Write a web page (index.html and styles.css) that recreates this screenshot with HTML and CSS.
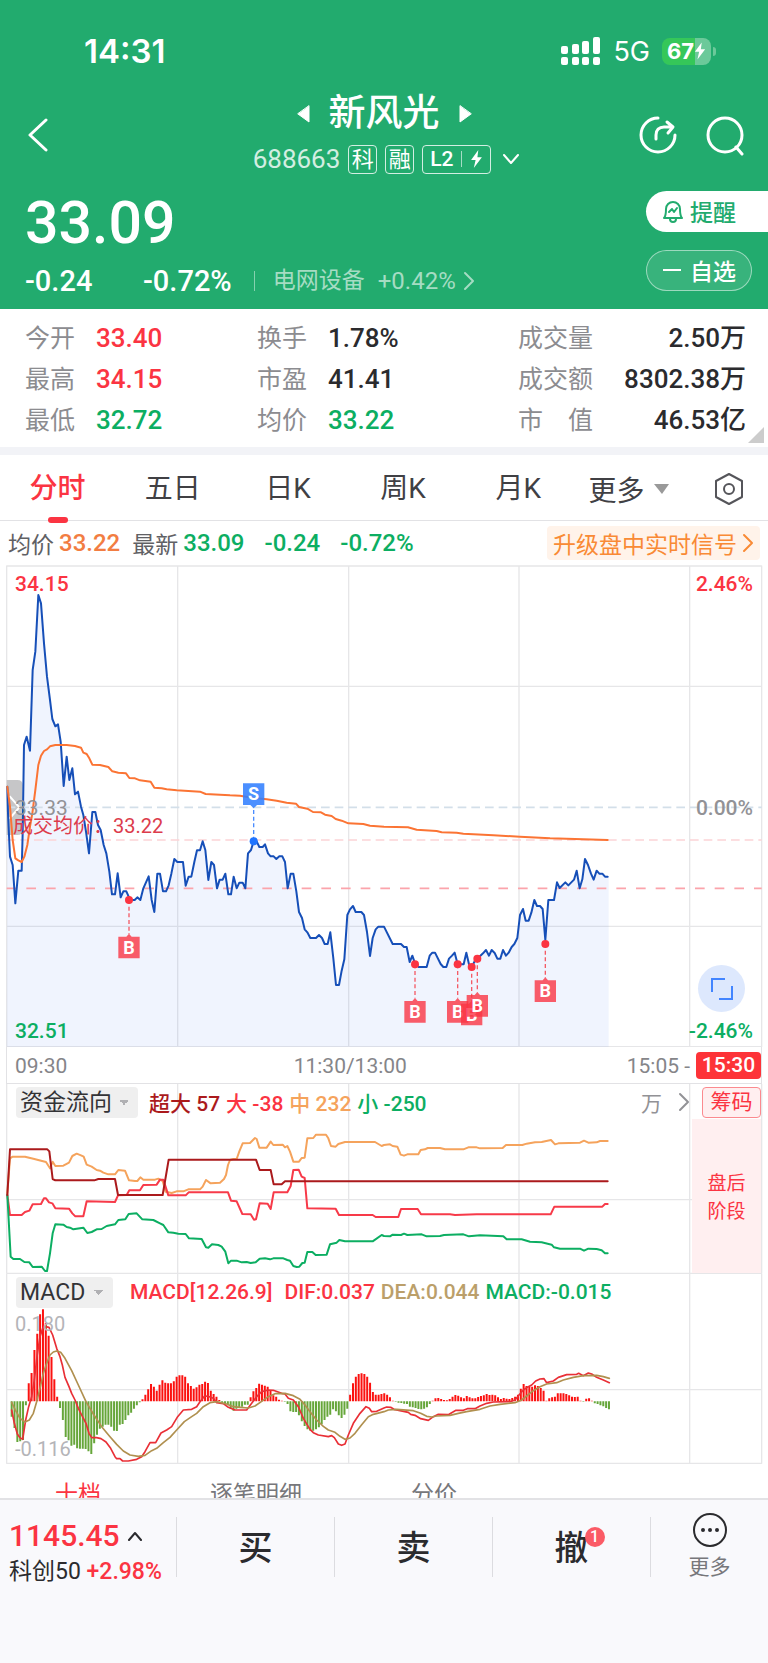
FILE: index.html
```html
<!DOCTYPE html>
<html lang="zh-CN">
<head>
	<meta charset="utf-8">
	<meta name="viewport" content="width=device-width, initial-scale=1">
	<title>新风光 688663</title>
	<link rel="stylesheet" href="styles.css">
</head>
<body>
	<header class="header">
		<div class="statusbar">
			<span class="clock">14:31</span>
			<div class="status-icons">
				<svg class="signal" viewBox="0 0 40 28">
					<rect x="0" y="9" width="7" height="8" rx="2"/><rect x="11" y="7" width="7" height="10" rx="2"/><rect x="21" y="4" width="7" height="13" rx="2"/><rect x="32" y="0" width="7" height="17" rx="2"/>
					<rect x="0" y="20" width="7" height="8" rx="2"/><rect x="11" y="20" width="7" height="8" rx="2"/><rect x="21" y="20" width="7" height="8" rx="2"/><rect x="32" y="20" width="7" height="8" rx="2"/>
				</svg>
				<span class="net">5G</span>
				<span class="battery">67<svg viewBox="0 0 14 20"><path d="M9 0L1 11h5L4 20l9-12H8z"/></svg></span>
			</div>
		</div>
		<div class="nav">
			<button class="icon-btn back" aria-label="返回"><svg viewBox="0 0 22 34"><path d="M19 2L3 17l16 15"/></svg></button>
			<div class="title">
				<div class="name-row">
					<button class="icon-btn" aria-label="上一只"><svg class="tri" viewBox="0 0 13 18"><path d="M12 1v16L1 9z"/></svg></button>
					<h1>新风光</h1>
					<button class="icon-btn" aria-label="下一只"><svg class="tri" viewBox="0 0 13 18"><path d="M1 1v16L12 9z"/></svg></button>
				</div>
				<div class="code-row">
					<span class="code">688663</span>
					<span class="tag">科</span>
					<span class="tag">融</span>
					<span class="tag tag-l2">L2<i></i><svg viewBox="0 0 14 20"><path d="M9 0L1 11h5L4 20l9-12H8z"/></svg></span>
					<svg class="chev" viewBox="0 0 16 10"><path d="M1 1l7 8 7-8"/></svg>
				</div>
			</div>
			<div class="nav-icons">
				<button class="icon-btn" aria-label="分享"><svg viewBox="0 0 40 40"><path d="M20 2A17 17 0 1 0 37 19M18 23v-4c0-5 3-8 8-8h8M29 6l6 5-5 6"/></svg></button>
				<button class="icon-btn" aria-label="搜索"><svg viewBox="0 0 40 40"><circle cx="20" cy="19" r="17"/><path d="M31 31l6 7"/></svg></button>
			</div>
		</div>
		<div class="quote">
			<div class="quote-main">
				<div class="price">33.09</div>
				<div class="change-row">
					<span class="change">-0.24</span>
					<span class="percent">-0.72%</span>
					<a class="sector" href="#sector">电网设备 <b>+0.42%</b><svg viewBox="0 0 12 20"><path d="M2 2l8 8-8 8"/></svg></a>
				</div>
			</div>
			<div class="pills">
				<button class="pill pill-alert"><svg viewBox="0 0 22 24"><path d="M2 19c2-2 2-4 2-9a7 7 0 0 1 14 0c0 5 0 7 2 9zM8 20a3 3 0 0 0 6 0M7 13l3-3 2 3 3-4"/></svg>提醒</button>
				<button class="pill pill-fav"><svg viewBox="0 0 18 24"><path d="M0 12h18"/></svg>自选</button>
			</div>
		</div>
	</header>

	<section class="stats">
		<dl><dt>今开</dt><dd class="up">33.40</dd><dt>最高</dt><dd class="up">34.15</dd><dt>最低</dt><dd class="down">32.72</dd></dl>
		<dl><dt>换手</dt><dd>1.78%</dd><dt>市盈</dt><dd>41.41</dd><dt>均价</dt><dd class="down">33.22</dd></dl>
		<dl class="wide"><dt>成交量</dt><dd>2.50万</dd><dt>成交额</dt><dd>8302.38万</dd><dt class="spread"><span>市</span><span>值</span></dt><dd>46.53亿</dd></dl>
	</section>

	<nav class="tabs">
		<a class="active" href="#min">分时</a>
		<a href="#5d">五日</a>
		<a href="#day">日K</a>
		<a href="#week">周K</a>
		<a href="#month">月K</a>
		<button class="more-tab">更多<svg viewBox="0 0 15 10"><path d="M0 0h15L8 10z"/></svg></button>
		<button class="gear" aria-label="设置"><svg viewBox="0 0 30 32"><path d="M15 1l13 7v16l-13 7-13-7V8z"/><circle cx="15" cy="16" r="5"/></svg></button>
	</nav>

	<div class="info">
		<span>均价</span><b class="avg">33.22</b>
		<span>最新</span><b class="down">33.09</b>
		<b class="down wide-gap">-0.24</b>
		<b class="down wide-gap">-0.72%</b>
		<a class="upgrade" href="#upgrade">升级盘中实时信号<svg viewBox="0 0 12 20"><path d="M2 2l8 8-8 8"/></svg></a>
	</div>

	<main>
		<section class="panel">
			<svg class="chart" viewBox="0 -705 2304 1446">
				<defs>
					<g id="buy">
						<path class="buy-tag" d="M-32 0h24l8-9 8 9h24v65h-64z"/>
						<text class="mark" y="51">B</text>
					</g>
				</defs>
				<path class="grid" d="M20-702H2285V740H20zM20-341H2285M20 379H2285M533-702V740M1046-702V740M1557-702V740M2069-702V740"/>
				<path class="handle" d="M20-60h32q16 0 16 16V89q0 16-16 16H20z"/>
				<path class="handle-arrow" d="M30 -10L58 22L30 54"/>
				<polygon class="area" points="20,740 22,-40 24,40 30,170 38,195 46,310 55,212 65,212 68,100 72,-165 80,-190 90,-148 98,-390 106,-445 115,-615 123,-590 132,-470 141,-370 150,-300 157,-243 166,-221 174,-227 182,-175 191,-42 200,-130 208,-60 217,-95 225,-17 234,-25 243,20 250,45 258,95 267,160 277,36 286,36 294,75 302,90 311,135 319,160 328,215 336,283 345,283 353,220 362,292 370,274 379,274 387,292 396,300 404,300 412,292 421,300 430,265 446,229 455,300 463,336 472,221 480,221 489,274 498,274 506,256 514,221 523,177 532,186 549,186 557,257 566,230 574,230 583,186 591,151 600,151 608,124 616,150 625,240 634,186 642,195 651,265 659,239 668,239 676,221 685,283 693,283 701,230 710,265 718,248 728,248 736,265 744,160 753,150 761,124 770,124 778,141 788,141 795,133 804,160 812,169 821,169 829,177 838,169 847,169 855,186 863,265 872,221 880,221 889,274 897,336 906,354 914,388 922,397 931,414 948,414 957,405 966,414 974,432 983,432 991,397 1000,475 1008,555 1017,555 1025,512 1033,478 1042,345 1050,328 1059,318 1067,336 1084,336 1092,345 1101,396 1110,468 1118,414 1127,388 1135,380 1152,380 1178,432 1203,432 1212,441 1220,441 1229,486 1237,467 1246,493 1256,501 1280,501 1289,467 1297,458 1305,458 1322,492 1330,501 1339,501 1347,476 1356,467 1364,458 1373,493 1391,493 1399,458 1407,493 1415,501 1424,484 1432,476 1449,460 1458,450 1467,467 1475,450 1484,459 1492,476 1501,476 1509,450 1518,467 1526,458 1535,441 1543,432 1552,414 1560,345 1569,327 1577,362 1586,362 1594,338 1603,300 1611,318 1620,318 1628,327 1636,420 1645,300 1662,300 1671,247 1679,264 1696,247 1705,256 1722,239 1730,212 1739,265 1747,238 1755,177 1764,195 1773,221 1781,239 1790,212 1798,221 1807,221 1815,230 1826,230 1826,740"/>
				<path class="dash-zero" d="M20 22H2285"/>
				<path class="dash-avg" d="M20 120H2285"/>
				<path class="dash-cost" d="M20 265H2285"/>
				<polyline class="line price-line" points="22,-40 24,40 30,170 38,195 46,310 55,212 65,212 68,100 72,-165 80,-190 90,-148 98,-390 106,-445 115,-615 123,-590 132,-470 141,-370 150,-300 157,-243 166,-221 174,-227 182,-175 191,-42 200,-130 208,-60 217,-95 225,-17 234,-25 243,20 250,45 258,95 267,160 277,36 286,36 294,75 302,90 311,135 319,160 328,215 336,283 345,283 353,220 362,292 370,274 379,274 387,292 396,300 404,300 412,292 421,300 430,265 446,229 455,300 463,336 472,221 480,221 489,274 498,274 506,256 514,221 523,177 532,186 549,186 557,257 566,230 574,230 583,186 591,151 600,151 608,124 616,150 625,240 634,186 642,195 651,265 659,239 668,239 676,221 685,283 693,283 701,230 710,265 718,248 728,248 736,265 744,160 753,150 761,124 770,124 778,141 788,141 795,133 804,160 812,169 821,169 829,177 838,169 847,169 855,186 863,265 872,221 880,221 889,274 897,336 906,354 914,388 922,397 931,414 948,414 957,405 966,414 974,432 983,432 991,397 1000,475 1008,555 1017,555 1025,512 1033,478 1042,345 1050,328 1059,318 1067,336 1084,336 1092,345 1101,396 1110,468 1118,414 1127,388 1135,380 1152,380 1178,432 1203,432 1212,441 1220,441 1229,486 1237,467 1246,493 1256,501 1280,501 1289,467 1297,458 1305,458 1322,492 1330,501 1339,501 1347,476 1356,467 1364,458 1373,493 1391,493 1399,458 1407,493 1415,501 1424,484 1432,476 1449,460 1458,450 1467,467 1475,450 1484,459 1492,476 1501,476 1509,450 1518,467 1526,458 1535,441 1543,432 1552,414 1560,345 1569,327 1577,362 1586,362 1594,338 1603,300 1611,318 1620,318 1628,327 1636,420 1645,300 1662,300 1671,247 1679,264 1696,247 1705,256 1722,239 1730,212 1739,265 1747,238 1755,177 1764,195 1773,221 1781,239 1790,212 1798,221 1807,221 1815,230 1823,230"/>
				<polyline class="line avg-line" points="22,-40 30,20 38,120 46,175 55,181 65,186 73,170 82,135 90,80 97,40 106,-30 115,-105 123,-133 132,-147 141,-152 150,-161 166,-165 200,-165 225,-162 243,-157 250,-142 260,-138 268,-125 277,-106 300,-105 325,-99 337,-86 355,-82 378,-80 388,-66 405,-65 420,-59 452,-55 463,-37 485,-35 500,-32 530,-29 600,-25 617,-18 660,-16 690,-14 720,-13 760,-6 800,-2 830,2 860,8 888,11 897,21 922,26 939,36 963,37 975,44 995,48 1007,57 1025,62 1045,70 1090,72 1110,77 1152,80 1224,82 1250,89 1310,93 1325,97 1370,98 1390,101 1480,106 1560,110 1650,115 1750,118 1823,120"/>
				<!-- trade marks -->
				<path class="stem" d="M387 300V402M1245 493V595M1373 493V595M1415 501V603M1432 476V577M1636 432V533"/>
				<path class="stem sell" d="M761 30V124"/>
				<g class="dots">
					<circle cx="387" cy="300" r="12"/><circle cx="1245" cy="493" r="12"/><circle cx="1373" cy="493" r="12"/>
					<circle cx="1415" cy="501" r="12"/><circle cx="1432" cy="476" r="12"/><circle cx="1636" cy="432" r="12"/>
					<circle class="sell-dot" cx="761" cy="124" r="12"/>
				</g>
				<path class="sell-tag" d="M729-50h64v65h-22l-10 10-10-10h-22z"/>
				<text class="mark" x="761" y="1">S</text>
				<use href="#buy" x="387" y="410"/>
				<use href="#buy" x="1245" y="603"/>
				<use href="#buy" x="1373" y="603"/>
				<use href="#buy" x="1415" y="611"/>
				<use href="#buy" x="1432" y="585"/>
				<use href="#buy" x="1636" y="541"/>
			</svg>
			<span class="lab lab-high up">34.15</span>
			<span class="lab lab-pct-high up">2.46%</span>
			<span class="lab lab-mid">33.33</span>
			<span class="lab lab-pct-mid">0.00%</span>
			<span class="lab lab-cost">成交均价：33.22</span>
			<span class="lab lab-low down">32.51</span>
			<span class="lab lab-pct-low down">-2.46%</span>
			<button class="expand" aria-label="全屏"><svg viewBox="0 0 24 24"><path d="M2 15V2h13M22 9v13H9"/></svg></button>
		</section>
		<div class="axis">
			<span>09:30</span>
			<span>11:30/13:00</span>
			<span class="axis-end">15:05 - <b>15:30</b></span>
		</div>

		<section class="panel">
			<svg class="chart" viewBox="0 12 2304 570">
				<path class="grid" d="M20 0V580H2285V0M20 359H2285M533 0V580M1046 0V580M1557 0V580M2069 0V580"/>
				<polyline class="line flow-mid" points="22,340 30,235 38,230 75,230 100,236 138,246 150,265 158,245 166,258 190,257 207,248 217,228 230,221 243,226 251,230 260,254 275,260 290,270 300,272 310,278 325,283 345,283 355,270 375,272 387,301 405,303 412,303 421,292 430,299 465,299 475,296 488,303 497,335 515,339 530,334 550,334 565,328 600,328 608,320 618,300 632,310 660,308 672,297 678,285 684,255 690,240 700,237 710,237 718,214 728,190 750,189 765,174 770,177 778,203 800,203 812,185 820,195 848,194 855,202 862,198 870,215 880,245 897,245 905,234 914,233 922,175 940,174 948,164 978,164 985,175 993,198 1007,200 1015,192 1035,186 1125,186 1145,198 1152,195 1170,193 1178,198 1192,200 1202,224 1212,227 1222,223 1255,223 1262,210 1275,208 1283,204 1320,204 1335,208 1390,208 1405,202 1430,202 1440,205 1508,204 1518,195 1567,195 1580,191 1605,187 1625,186 1653,180 1665,193 1675,190 1740,188 1752,182 1765,188 1790,187 1800,183 1823,183"/>
				<polyline class="line flow-big" points="22,345 30,405 65,405 75,396 88,392 98,373 123,372 132,355 138,355 147,367 157,370 166,385 207,386 217,400 226,409 250,409 260,364 345,366 354,346 380,345 388,331 420,331 430,315 470,314 480,299 490,299 505,346 557,346 566,337 684,337 693,362 710,364 727,402 752,403 762,419 768,418 779,370 803,371 812,387 821,337 862,337 872,318 880,270 896,269 905,290 914,294 922,385 1007,386 1017,405 1118,405 1127,411 1195,411 1203,387 1253,387 1263,403 1350,403 1365,405 1430,403 1652,403 1663,380 1807,380 1815,372 1823,372"/>
				<polyline class="line flow-small" points="22,345 32,530 40,537 60,537 73,546 88,547 98,561 125,560 135,573 141,573 150,520 158,460 166,433 190,434 200,441 210,443 220,448 250,443 262,459 275,456 290,448 305,447 320,438 345,433 355,420 376,418 386,402 410,400 427,418 460,420 480,430 490,435 505,457 520,458 535,461 557,462 567,475 605,477 618,502 625,503 636,493 655,495 665,500 676,515 685,550 693,542 710,542 725,547 740,546 752,549 767,547 779,536 795,535 810,538 820,535 850,535 862,540 870,542 880,558 890,561 898,560 907,549 914,548 922,516 937,516 947,525 980,524 990,493 1010,488 1018,480 1035,484 1118,484 1145,465 1152,468 1170,469 1178,464 1203,465 1212,461 1222,465 1265,463 1280,469 1320,468 1332,465 1390,463 1407,469 1440,466 1510,469 1520,478 1565,478 1590,485 1625,487 1655,494 1662,502 1680,506 1740,506 1752,512 1765,506 1790,507 1805,511 1815,520 1823,520"/>
				<polyline class="line flow-super" points="22,345 30,208 142,208 148,214 158,297 166,301 283,301 295,297 345,297 354,345 488,345 506,239 768,239 779,270 812,270 821,313 845,313 855,304 1823,304"/>
			</svg>
			<div class="panel-head">
				<select class="picker" aria-label="指标一"><option>资金流向</option></select>
				<div class="legend legend-flow">
					<span class="c-super">超大 57</span><span class="c-big">大 -38</span><span class="c-mid">中 232</span><span class="down">小 -250</span>
				</div>
				<span class="unit">万<svg viewBox="0 0 12 20"><path d="M2 2l8 8-8 8"/></svg></span>
				<button class="chips">筹码</button>
			</div>
			<div class="after-hours">盘后<br>阶段</div>
		</section>

		<section class="panel">
			<svg class="chart" viewBox="0 12 2304 570">
				<path class="grid" d="M20 0V580H2285V0M20 10H2285M20 359H2285M533 0V580M1046 0V580M1557 0V580M2069 0V580"/>
				<path id="bars-up" class="bars bars-up" d=""/>
				<path id="bars-down" class="bars bars-down" d=""/>
				<polyline class="line dif" points="35,420 43,460 52,492 60,503 68,508 77,450 86,410 95,380 103,330 111,260 120,200 128,175 137,170 147,172 158,195 170,235 180,260 187,285 195,322 207,350 215,370 225,390 235,415 245,435 258,460 267,490 275,503 290,503 303,506 318,516 332,535 345,560 350,566 360,566 368,573 385,573 410,568 425,560 435,545 450,518 467,518 483,489 500,480 515,470 533,440 550,420 575,418 590,410 600,395 612,380 622,378 640,385 650,398 670,401 685,412 705,420 740,420 755,400 770,380 785,365 805,360 820,361 845,370 855,372 865,385 880,390 895,410 910,445 930,478 940,488 955,495 985,500 995,497 1003,503 1015,522 1025,526 1035,522 1045,495 1060,460 1080,430 1098,410 1108,415 1115,425 1130,424 1152,414 1160,411 1172,412 1182,418 1225,427 1232,433 1245,436 1262,446 1285,451 1300,440 1315,433 1345,434 1355,428 1368,421 1390,421 1402,416 1425,416 1440,408 1460,400 1480,396 1530,395 1545,390 1557,375 1570,360 1585,350 1595,345 1607,333 1620,327 1632,326 1640,338 1660,333 1675,322 1700,314 1730,313 1736,310 1750,317 1765,309 1775,312 1790,322 1810,330 1828,338"/>
				<polyline class="line dea" points="35,397 45,418 60,445 75,456 88,450 100,430 110,395 120,355 130,310 140,280 150,255 160,246 170,243 182,247 195,265 215,302 235,345 258,395 280,432 305,470 330,500 350,523 370,543 390,555 415,559 435,556 455,542 470,535 490,518 510,502 530,480 553,455 575,440 590,430 610,410 630,398 650,395 680,402 700,410 720,412 745,414 765,408 785,394 805,380 825,371 855,370 880,377 900,388 915,405 930,425 950,450 970,469 985,480 1005,487 1020,499 1035,508 1050,504 1065,490 1085,464 1105,440 1120,433 1152,425 1165,420 1190,418 1240,422 1262,430 1280,439 1295,441 1310,438 1350,436 1375,430 1400,425 1440,418 1470,408 1500,403 1545,398 1565,390 1580,378 1600,362 1620,350 1640,342 1670,338 1690,330 1720,322 1750,317 1790,316 1810,320 1828,325"/>
			</svg>
			<span class="lab lab-small lab-macd-high">0.180</span>
			<span class="lab lab-small lab-macd-low">-0.116</span>
			<div class="panel-head">
				<select class="picker picker-macd" aria-label="指标二"><option>MACD</option></select>
				<div class="legend legend-macd">
					<span class="up first">MACD[12.26.9]</span><span class="up">DIF:0.037</span><span class="c-dea">DEA:0.044</span><span class="down">MACD:-0.015</span>
				</div>
			</div>
		</section>
	</main>

	<nav class="subtabs">
		<a class="active" href="#ten">十档</a>
		<a href="#ticks">逐笔明细</a>
		<a href="#levels">分价</a>
	</nav>

	<footer class="toolbar">
		<a class="index" href="#index">
			<span class="index-value">1145.45<svg viewBox="0 0 16 10"><path d="M2 9l6-7 6 7"/></svg></span>
			<span class="index-name">科创50 <b>+2.98%</b></span>
		</a>
		<button class="trade">买</button>
		<button class="trade">卖</button>
		<button class="trade"><span class="cancel">撤<i class="badge">1</i></span></button>
		<button class="more"><svg viewBox="0 0 36 36"><circle cx="18" cy="18" r="16"/><path d="M11 18h0M18 18h0M25 18h0"/></svg>更多</button>
	</footer>
	<script src="script.js"></script>
</body>
</html>
```
FILE: styles.css
```css
*
{
	box-sizing:border-box;
}
body
{
	margin:0;
	background:#fff;
	color:#2b2b2e;
	font-family:Roboto,"Noto Sans CJK SC",sans-serif;
	font-size:24px;
}
button,select
{
	margin:0;
	padding:0;
	border:0;
	background:none;
	color:inherit;
	font:inherit;
}
a
{
	color:inherit;
	text-decoration:none;
}
b
{
	font-weight:500;
}
svg
{
	display:block;
	fill:none;
	stroke-linecap:round;
	stroke-linejoin:round;
}
.up
{
	color:#fb3442;
}
.down
{
	color:#0cae62;
}

/* header */
.header
{
	background:#22ab6e;
	color:#fff;
	height:309px;
}
.statusbar
{
	display:flex;
	justify-content:space-between;
	align-items:center;
	height:88px;
	padding:14px 57px 0 84px;
	font-family:Inter,"Noto Sans CJK SC",sans-serif;
}
.clock
{
	font-size:33px;
	font-weight:600;
}
.status-icons
{
	display:flex;
	align-items:center;
}
.signal
{
	width:40px;
	height:28px;
	fill:#fff;
}
.net
{
	margin:0 12px;
	font-size:27px;
}
.battery
{
	display:flex;
	align-items:center;
	justify-content:center;
	width:49px;
	height:27px;
	border-radius:8px;
	background:linear-gradient(90deg,#35c759 67%,#6cc99a 67%);
	position:relative;
	font-size:22px;
	font-weight:700;
}
.battery::after
{
	content:"";
	position:absolute;
	right:-5px;
	top:9px;
	width:3px;
	height:9px;
	border-radius:0 3px 3px 0;
	background:#6cc99a;
}
.battery svg
{
	width:12px;
	height:18px;
	fill:#fff;
}
.nav
{
	display:grid;
	grid-template-columns:160px 1fr 160px;
	align-items:center;
	height:92px;
	padding-top:2px;
}
.icon-btn svg
{
	stroke:#fff;
	stroke-width:3;
}
.back
{
	padding-left:27px;
}
.back svg
{
	width:22px;
	height:34px;
}
.name-row,.code-row
{
	display:flex;
	align-items:center;
	justify-content:center;
}
.name-row
{
	height:48px;
	gap:19px;
}
h1
{
	margin:0;
	font-size:37px;
	font-weight:500;
	line-height:48px;
}
.icon-btn .tri
{
	width:13px;
	height:18px;
	fill:#fff;
	stroke-width:1;
}
.code-row
{
	height:42px;
	padding-left:4px;
	gap:8px;
}
.code
{
	font-size:26px;
	opacity:0.8;
}
.tag
{
	display:flex;
	align-items:center;
	justify-content:center;
	width:29px;
	height:29px;
	border:1px solid rgba(255,255,255,0.8);
	border-radius:4px;
	font-size:22px;
	line-height:27px;
}
.tag-l2
{
	width:69px;
	gap:8px;
	font-size:21px;
	font-weight:500;
}
.tag-l2 i
{
	width:1px;
	height:16px;
	background:rgba(255,255,255,0.6);
}
.tag-l2 svg
{
	width:13px;
	height:18px;
	fill:#fff;
}
.chev
{
	width:16px;
	height:10px;
	margin-left:4px;
	stroke:#fff;
	stroke-width:2;
}
.nav-icons
{
	display:flex;
	justify-content:flex-end;
	gap:27px;
	padding:2px 23px 0 0;
}
.nav-icons svg
{
	width:40px;
	height:40px;
}
.quote
{
	display:flex;
	justify-content:space-between;
	padding:11px 0 0 25px;
}
.price
{
	font-size:59px;
	font-weight:500;
	line-height:64px;
}
.change-row
{
	display:flex;
	align-items:center;
	height:52px;
	font-size:29px;
	font-weight:500;
}
.change
{
	width:118px;
}
.sector
{
	display:flex;
	align-items:center;
	margin-left:22px;
	padding-left:18px;
	border-left:1px solid rgba(255,255,255,0.45);
	color:#a5dcc3;
	font-size:23px;
	font-weight:400;
	line-height:20px;
}
.sector b
{
	margin-left:13px;
	font-size:24px;
	font-weight:400;
}
.sector svg
{
	width:12px;
	height:20px;
	margin-left:7px;
	stroke:#a5dcc3;
	stroke-width:2;
}
.pills
{
	display:flex;
	flex-direction:column;
	gap:18px;
}
.pill
{
	display:flex;
	align-items:center;
	height:41px;
	padding:0 0 2px 16px;
	font-size:23px;
	font-weight:500;
}
.pill-alert
{
	width:122px;
	border-radius:21px 0 0 21px;
	background:#fff;
	color:#22ab6e;
	gap:6px;
}
.pill-alert svg
{
	width:22px;
	height:24px;
	stroke:#22ab6e;
	stroke-width:2;
}
.pill-fav
{
	width:106px;
	border:1px solid rgba(255,255,255,0.5);
	border-radius:21px;
	background:rgba(255,255,255,0.1);
	gap:9px;
}
.pill-fav svg
{
	width:18px;
	height:24px;
	stroke:#fff;
	stroke-width:2;
}

/* stats */
.stats
{
	display:grid;
	grid-template-columns:232fr 261fr 228fr;
	padding:9px 22px 6px 25px;
	position:relative;
}
.stats::after
{
	content:"";
	position:absolute;
	right:4px;
	bottom:4px;
	border-left:16px solid transparent;
	border-bottom:16px solid #ccc;
}
.stats dl
{
	display:grid;
	grid-template-columns:71px 1fr;
	margin:0;
	line-height:41px;
}
.stats .wide
{
	grid-template-columns:75px 1fr;
}
.stats dt
{
	color:#8c8c90;
	font-size:25px;
}
.stats .spread
{
	display:flex;
	justify-content:space-between;
}
.stats dd
{
	margin:0;
	font-size:26px;
	font-weight:500;
}
.stats .wide dd
{
	text-align:right;
}

/* period tabs */
.tabs
{
	display:grid;
	grid-template-columns:repeat(5,15%) 1fr 78px;
	height:74px;
	border-top:8px solid #f2f3f7;
	border-bottom:1px solid #e2e2e5;
	color:#404044;
	font-size:28px;
}
.tabs a
{
	position:relative;
	line-height:68px;
	text-align:center;
}
.tabs .active
{
	color:#fb3442;
	font-weight:500;
}
.tabs .active::after
{
	content:"";
	position:absolute;
	left:50%;
	bottom:0;
	width:20px;
	height:6px;
	margin-left:-10px;
	border-radius:3px;
	background:#fb3442;
}
.more-tab,.gear
{
	display:flex;
	align-items:center;
	justify-content:center;
}
.more-tab
{
	gap:10px;
	padding:0 8px 1px 0;
}
.more-tab svg
{
	width:15px;
	height:10px;
	fill:#999;
}
.gear svg
{
	width:30px;
	height:32px;
	stroke:#55555a;
	stroke-width:2;
}

.info
{
	display:flex;
	align-items:center;
	height:44px;
	padding:0 8px;
	color:#606064;
	font-size:23px;
}
.info b
{
	margin:0 12px 0 5px;
	font-size:24px;
}
.info .wide-gap
{
	margin:0 12px 0 8px;
}
.avg
{
	color:#f27d42;
}
.upgrade
{
	display:flex;
	align-items:center;
	height:34px;
	margin-left:auto;
	padding:0 6px;
	border-radius:4px;
	background:#fff3ea;
	color:#f98a35;
}
.upgrade svg
{
	width:12px;
	height:20px;
	margin-left:5px;
	stroke:#f98a35;
	stroke-width:2;
}

/* charts */
.panel
{
	position:relative;
}
.chart
{
	width:100%;
	height:auto;
}
.grid
{
	stroke:#e6e6e8;
	stroke-width:4;
}
.line
{
	stroke-width:6;
}
.price-line
{
	stroke:#164fb8;
}
.avg-line
{
	stroke:#fb7434;
}
.area
{
	fill:rgba(64,120,240,0.08);
}
.handle
{
	fill:#c6c6c8;
}
.handle-arrow
{
	stroke:#fff;
	stroke-width:6;
}
.dash-zero,.dash-avg,.dash-cost
{
	stroke:#d3dfe9;
	stroke-width:5;
	stroke-dasharray:26 15;
	stroke-linecap:butt;
}
.dash-avg
{
	stroke:#fbd3d6;
}
.dash-cost
{
	stroke:#fba4ab;
	stroke-dasharray:29 30;
}
.stem
{
	stroke:#f45b66;
	stroke-width:4;
	stroke-dasharray:12 8;
	stroke-linecap:butt;
}
.sell
{
	stroke:#4a8cff;
}
.dots
{
	fill:#fb3442;
}
.sell-dot
{
	fill:#1f74ff;
}
.buy-tag
{
	fill:rgba(250,52,68,0.8);
}
.sell-tag
{
	fill:rgba(50,127,255,0.88);
}
.mark
{
	fill:#fff;
	font-size:54px;
	font-weight:700;
	text-anchor:middle;
}
.lab
{
	position:absolute;
	left:15px;
	font-size:21px;
	font-weight:500;
	line-height:24px;
}
.lab-high,.lab-pct-high
{
	top:7px;
}
.lab-mid,.lab-pct-mid
{
	top:231px;
	color:#929296;
}
.lab-mid
{
	font-weight:400;
}
.lab-low,.lab-pct-low
{
	bottom:4px;
}
.lab-pct-high,.lab-pct-mid,.lab-pct-low
{
	left:auto;
	right:15px;
}
.lab-cost
{
	top:249px;
	left:13px;
	color:#dc3c4c;
	font-size:20px;
	font-weight:400;
}
.lab-small
{
	color:#b4b4b8;
	font-size:20px;
	font-weight:400;
}
.lab-macd-high
{
	top:38px;
}
.lab-macd-low
{
	bottom:3px;
}
.expand
{
	position:absolute;
	right:23px;
	bottom:35px;
	display:flex;
	align-items:center;
	justify-content:center;
	width:47px;
	height:47px;
	border-radius:50%;
	background:#dde8fd;
}
.expand svg
{
	width:24px;
	height:24px;
	stroke:#4285ff;
	stroke-width:2;
	stroke-linecap:butt;
	stroke-linejoin:miter;
}
.axis
{
	display:grid;
	grid-template-columns:1fr 1fr 1fr;
	align-items:center;
	height:37px;
	margin:0 6px;
	padding:1px 0 0 8px;
	border:1px solid #e2e2e5;
	border-top:0;
	color:#858589;
	font-size:21px;
}
.axis span:nth-child(2)
{
	padding-left:30px;
}
.axis-end
{
	display:flex;
	align-items:center;
	justify-content:flex-end;
	gap:6px;
}
.axis-end b
{
	width:65px;
	border-radius:4px;
	background:#fd3338;
	color:#fff;
	line-height:27px;
	text-align:center;
}
.panel-head
{
	position:absolute;
	top:3px;
	left:16px;
	right:7px;
	display:flex;
	align-items:center;
	height:31px;
}
.picker
{
	appearance:none;
	width:122px;
	height:31px;
	padding-left:4px;
	border-radius:4px;
	background:linear-gradient(45deg,transparent 50%,#b0b0b3 50%) right 14px top 13px/5px 5px no-repeat,linear-gradient(-45deg,transparent 50%,#b0b0b3 50%) right 9px top 13px/5px 5px no-repeat #efefef;
	color:#333336;
	font-size:23px;
}
.picker-macd
{
	width:97px;
}
.legend
{
	display:flex;
	padding-bottom:2px;
	font-size:21px;
	font-weight:500;
}
.legend-flow
{
	margin-left:11px;
	gap:6px;
}
.legend-macd
{
	margin-left:17px;
	gap:6px;
}
.legend .first
{
	margin-right:6px;
}
.c-super
{
	color:#ab1a1c;
}
.c-big
{
	color:#fb3442;
}
.c-mid
{
	color:#f5a35c;
}
.c-dea
{
	color:#bb9f6a;
}
.flow-super
{
	stroke:#ab1a1c;
}
.flow-big
{
	stroke:#f73a49;
}
.flow-mid
{
	stroke:#f5a35c;
}
.flow-small
{
	stroke:#0cae62;
}
.dif
{
	stroke:#e92f36;
	stroke-width:5;
}
.dea
{
	stroke:#b0904f;
	stroke-width:5;
}
.bars
{
	stroke-width:6;
	stroke-linecap:butt;
}
.bars-up
{
	stroke:#fb1210;
}
.bars-down
{
	stroke:#66a63a;
}
.unit
{
	display:flex;
	align-items:center;
	margin-left:auto;
	padding-bottom:2px;
	color:#929296;
	font-size:21px;
}
.unit svg
{
	width:12px;
	height:20px;
	margin:0 12px 0 16px;
	stroke:#929296;
	stroke-width:2;
}
.chips
{
	width:59px;
	height:31px;
	border:1px solid #fb8a8f;
	border-radius:4px;
	background:#ffeff0;
	color:#fb3442;
	font-size:21px;
	line-height:29px;
}
.after-hours
{
	position:absolute;
	top:35px;
	right:7px;
	bottom:1px;
	display:flex;
	align-items:center;
	justify-content:center;
	width:69px;
	padding-top:4px;
	background:#ffeff0;
	color:#fb3442;
	font-size:19px;
	line-height:28px;
}

/* bottom */
.subtabs
{
	display:flex;
	gap:109px;
	height:64px;
	padding:13px 0 0 55px;
	color:#77777b;
	font-size:23px;
	line-height:36px;
}
.subtabs .active
{
	color:#fb3442;
}
.toolbar
{
	position:fixed;
	left:0;
	right:0;
	bottom:0;
	display:grid;
	grid-template-columns:176fr 158fr 158fr 158fr 118fr;
	align-items:start;
	height:165px;
	padding-top:17px;
	border-top:2px solid #e2e2e5;
	background:#f9f9fc;
}
.index
{
	padding-left:9px;
}
.index-value
{
	display:flex;
	align-items:center;
	gap:7px;
	color:#fb3442;
	font-size:30px;
	font-weight:500;
	line-height:38px;
}
.index-value svg
{
	width:16px;
	height:10px;
	stroke:#2b2b2e;
	stroke-width:2;
}
.index-name
{
	font-size:23px;
	line-height:34px;
	white-space:nowrap;
}
.index-name b
{
	color:#fb3442;
}
.trade
{
	height:60px;
	padding-bottom:3px;
	border-left:1px solid #dcdce0;
	font-size:34px;
	font-weight:500;
}
.cancel
{
	position:relative;
}
.badge
{
	position:absolute;
	top:-1px;
	right:-16px;
	width:20px;
	height:20px;
	border-radius:50%;
	background:#fb5b66;
	color:#fff;
	font-size:16px;
	font-style:normal;
	line-height:20px;
	text-align:center;
}
.more
{
	display:flex;
	flex-direction:column;
	align-items:center;
	height:60px;
	border-left:1px solid #dcdce0;
	color:#77777b;
	font-size:21px;
	line-height:30px;
}
.more svg
{
	width:36px;
	height:36px;
	flex:none;
	margin-bottom:4px;
	margin-top:-5px;
	stroke:#2b2b2e;
	stroke-width:2;
}
.more svg path
{
	stroke-width:4;
}
```
FILE: script.js
```js
// MACD histogram, one value per minute, in chart units
var macd = [-46,-80,-122,-120,-116,-12,54,85,154,203,261,276,235,197,133,66,14,-20,-56,-107,
	-117,-133,-130,-141,-142,-142,-143,-150,-158,-126,-100,-82,-76,-70,-70,-76,-88,-89,-70,-68,
	-56,-42,-34,-22,-12,-3,6,20,36,52,44,32,50,63,56,54,54,60,74,78,
	78,74,54,46,38,42,50,52,59,55,32,22,14,4,-8,-10,-12,-22,-28,-22,
	-18,-16,-10,-10,12,30,40,53,50,47,44,34,18,14,5,2,-1,-8,-30,-32,
	-32,-42,-60,-74,-84,-88,-88,-84,-78,-68,-56,-46,-40,-24,-30,-42,-50,-40,-22,20,
	54,74,82,84,82,74,56,28,20,20,22,24,20,12,2,-1,-4,-5,-7,-8,
	-16,-18,-20,-23,-24,-22,-18,-8,2,9,10,7,4,3,7,14,19,17,12,9,
	16,12,9,9,13,16,18,22,19,20,18,12,7,10,8,7,10,14,20,38,
	52,46,44,44,48,46,40,32,2,9,12,14,24,24,24,22,18,14,13,14,
	2,-1,8,9,2,-6,-8,-12,-15,-20,-24];

function drawBars()
{
	var up = "", down = "";
	for(var i=0;i<macd.length;i++)
	{
		var bar = "M" + (35 + i*8.533).toFixed(1) + " 394v" + (-macd[i]);
		if(macd[i]>0){up += bar;}else{down += bar;}
	}
	document.getElementById("bars-up").setAttribute("d", up);
	document.getElementById("bars-down").setAttribute("d", down);
}
drawBars();
```
